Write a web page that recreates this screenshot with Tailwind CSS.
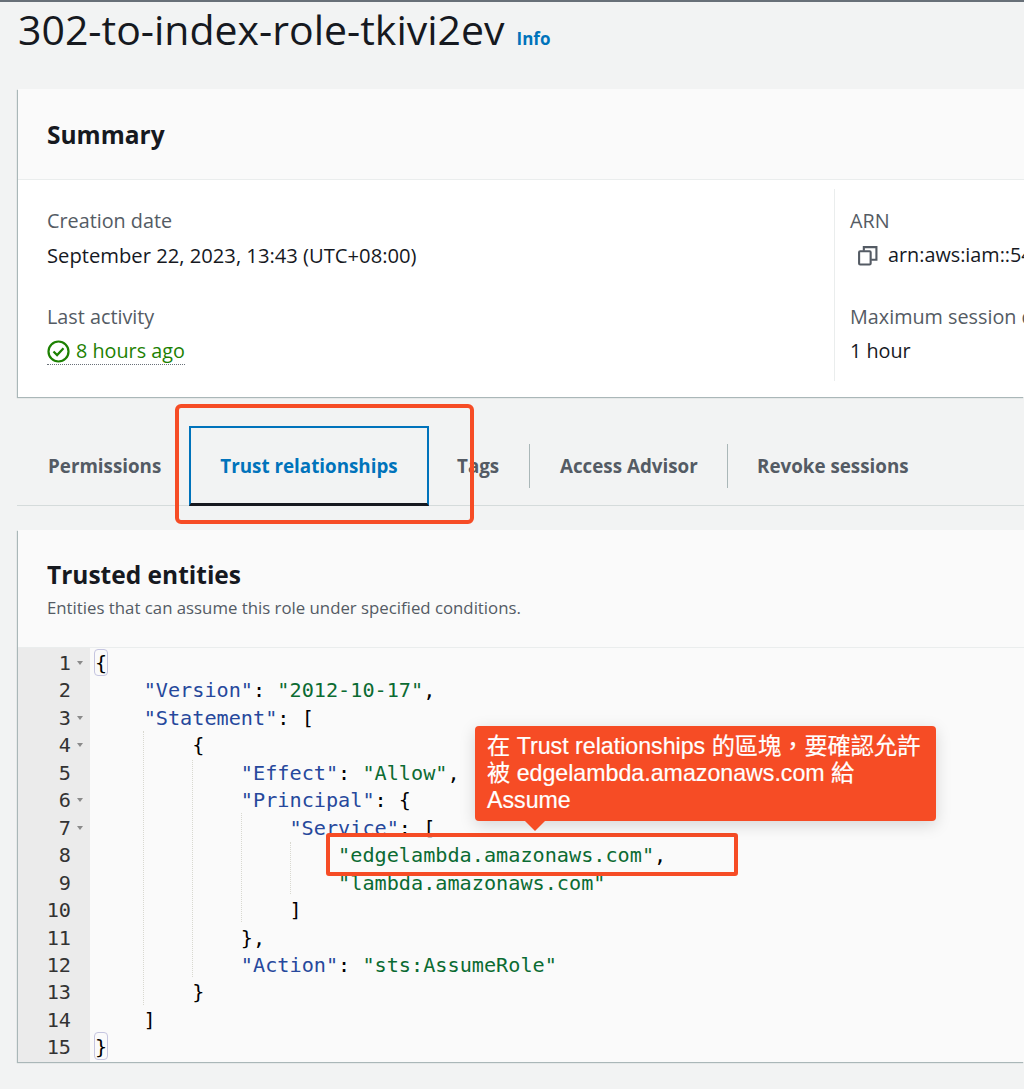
<!DOCTYPE html>
<html lang="zh-Hant">
<head>
    <meta charset="UTF-8">
    <title>302-to-index-role-tkivi2ev</title>
    <script src="https://cdn.jsdelivr.net/npm/@tailwindcss/browser@4"></script>
</head>
<body class="relative w-[1024px] h-[1089px] overflow-hidden bg-[#f2f3f3] text-[#16191f] font-['Open_Sans','Noto_Sans_CJK_TC',sans-serif]">

<div class="h-[2px] bg-[#687078]"></div>

<!-- Title -->
<div class="flex items-baseline h-[87px] pl-[18px] whitespace-nowrap">
    <h1 class="text-[41px] leading-[54px] font-normal">302-to-index-role-tkivi2ev</h1>
    <a class="ml-[12px] text-[17px] font-bold text-[#0073bb]">Info</a>
</div>

<!-- Summary -->
<section class="ml-[18px] h-[308px] bg-white shadow-[-1px_1px_1px_#aab7b8]">
    <div class="h-[91px] flex items-center pl-[29px] pt-[2px] border-b border-[#eaeded] bg-[#fafafa]">
        <h2 class="text-[24.5px] font-bold">Summary</h2>
    </div>
    <div class="flex pt-[9px] text-[19.8px] leading-[26px]">
        <div class="w-[816px] shrink-0 pl-[29px] pt-[19px]">
            <div class="text-[#545b64]">Creation date</div>
            <div class="mt-[8px] text-[20.2px] whitespace-nowrap">September 22, 2023, 13:43 (UTC+08:00)</div>
            <div class="text-[#545b64] mt-[36px]">Last activity</div>
            <div class="mt-[8px] inline-flex items-center gap-[6px] text-[#1d8102] border-b border-dotted border-[#687078]">
                <svg class="w-[23px] h-[23px]" viewBox="0 0 23 23" fill="none" stroke="#1d8102" stroke-width="2.2"><circle cx="11.5" cy="11.5" r="10"/><path d="M6.5 11.5l3.6 3.6 6.4-6.8"/></svg>
                8 hours ago
            </div>
        </div>
        <div class="h-[192px] border-l border-[#eaeded] pl-[15px] pt-[19px] whitespace-nowrap">
            <div class="text-[#545b64]">ARN</div>
            <div class="mt-[8px] flex items-center">
                <svg class="ml-[7px] mr-[10px] w-[21px] h-[21px]" viewBox="0 0 20 20" fill="none" stroke="#545b64" stroke-width="2"><rect x="2" y="6" width="11" height="12.5" rx="1"/><path d="M6.5 5.5V2h12v12h-5"/></svg>
                arn:aws:iam::54
            </div>
            <div class="text-[#545b64] mt-[36px]">Maximum session duration</div>
            <div class="mt-[8px]">1 hour</div>
        </div>
    </div>
</section>

<!-- Tabs -->
<nav class="ml-[17px] mt-[29px] h-[80px] border-b border-[#d5dbdb] flex items-center text-[18.8px] font-bold text-[#545b64] whitespace-nowrap">
    <span class="pl-[31px] w-[172px] pt-[2px]">Permissions</span>
    <span class="w-[240px] h-[80px] flex items-center justify-center border-2 border-b-[3px] border-[#0073bb] border-b-[#16191f] text-[#0073bb] pt-[2px]">Trust relationships</span>
    <span class="w-[101px] h-[44px] flex items-center pl-[28px] border-r border-[#aab7b8] pt-[2px]">Tags</span>
    <span class="w-[198px] h-[44px] flex items-center pl-[30px] border-r border-[#aab7b8] pt-[2px]">Access Advisor</span>
    <span class="pl-[29px] pt-[2px]">Revoke sessions</span>
</nav>

<!-- Trusted entities -->
<section class="ml-[18px] mt-[24px] h-[532px] bg-[#fafafa] shadow-[-1px_1px_1px_#aab7b8]">
    <div class="h-[118px] pl-[29px] pt-[27px] border-b border-[#eaeded]">
        <h2 class="text-[24.5px] leading-[36px] font-bold">Trusted entities</h2>
        <p class="text-[16.8px] leading-[22px] mt-[4px] text-[#545b64] whitespace-nowrap">Entities that can assume this role under specified conditions.</p>
    </div>
    <div class="flex font-['DejaVu_Sans_Mono',monospace] text-[20.2px] leading-[27.45px]">
        <!-- gutter -->
        <div class="w-[72px] h-[414px] pt-[2px] bg-[#ebebeb] text-[#333] pr-[19px] text-right relative">
            <div>1</div><div>2</div><div>3</div><div>4</div><div>5</div><div>6</div><div>7</div><div>8</div><div>9</div><div>10</div><div>11</div><div>12</div><div>13</div><div>14</div><div>15</div>
            <span class="absolute left-[59px] top-[13px] border-x-[3.5px] border-t-[4px] border-x-transparent border-t-[#8a8a8a]"></span>
            <span class="absolute left-[59px] top-[68px] border-x-[3.5px] border-t-[4px] border-x-transparent border-t-[#8a8a8a]"></span>
            <span class="absolute left-[59px] top-[95px] border-x-[3.5px] border-t-[4px] border-x-transparent border-t-[#8a8a8a]"></span>
            <span class="absolute left-[59px] top-[150px] border-x-[3.5px] border-t-[4px] border-x-transparent border-t-[#8a8a8a]"></span>
            <span class="absolute left-[59px] top-[178px] border-x-[3.5px] border-t-[4px] border-x-transparent border-t-[#8a8a8a]"></span>
        </div>
        <!-- code -->
        <pre class="relative flex-1 pl-[5px] pt-[2px] bg-[#fafafa] font-['DejaVu_Sans_Mono',monospace] text-[#000]"><span class="absolute left-[4px] top-[1px] w-[14px] h-[27px] rounded-[4px] border border-[#c5c5e0]"></span><span class="absolute left-[4px] top-[384px] w-[14px] h-[28px] rounded-[4px] border border-[#c5c5e0]"></span><span class="absolute left-[53px] top-[83px] h-[274px] border-l border-dotted border-[#d8d8d0]"></span><span class="absolute left-[102px] top-[112px] h-[217px] border-l border-dotted border-[#d8d8d0]"></span><span class="absolute left-[151px] top-[165px] h-[109px] border-l border-dotted border-[#d8d8d0]"></span><span class="absolute left-[200px] top-[194px] h-[52px] border-l border-dotted border-[#d8d8d0]"></span>{
    <span class="text-[#26489c]">"Version"</span>: <span class="text-[#0b6b32]">"2012-10-17"</span>,
    <span class="text-[#26489c]">"Statement"</span>: [
        {
            <span class="text-[#26489c]">"Effect"</span>: <span class="text-[#0b6b32]">"Allow"</span>,
            <span class="text-[#26489c]">"Principal"</span>: {
                <span class="text-[#26489c]">"Service"</span>: [
                    <span class="text-[#0b6b32]">"edgelambda.amazonaws.com"</span>,
                    <span class="text-[#0b6b32]">"lambda.amazonaws.com"</span>
                ]
            },
            <span class="text-[#26489c]">"Action"</span>: <span class="text-[#0b6b32]">"sts:AssumeRole"</span>
        }
    ]
}</pre>
    </div>
</section>

<!-- Annotations drawn over the screenshot -->
<div class="absolute left-[175px] top-[404px] w-[299px] h-[120px] rounded-[6px] border-[4px] border-[#f64c25]"></div>
<div class="absolute left-[326px] top-[833px] w-[412px] h-[43px] rounded-[3px] border-[4px] border-[#f64c25]"></div>
<div class="absolute left-[475px] top-[726px] w-[461px] h-[95px] rounded-[4px] bg-[#f64c25] text-white px-[12px] py-[7px] text-[23.2px] leading-[27px] [-webkit-text-stroke:0.2px_white] whitespace-nowrap font-['Liberation_Sans','Noto_Sans_CJK_TC',sans-serif] shadow-[0_4px_16px_rgba(0,0,0,0.15)]">
    在 Trust relationships 的區塊，要確認允許<br>被 edgelambda.amazonaws.com 給<br>Assume
    <span class="absolute left-[50px] top-[95px] border-x-[10px] border-t-[10px] border-x-transparent border-t-[#f64c25]"></span>
</div>

</body>
</html>
